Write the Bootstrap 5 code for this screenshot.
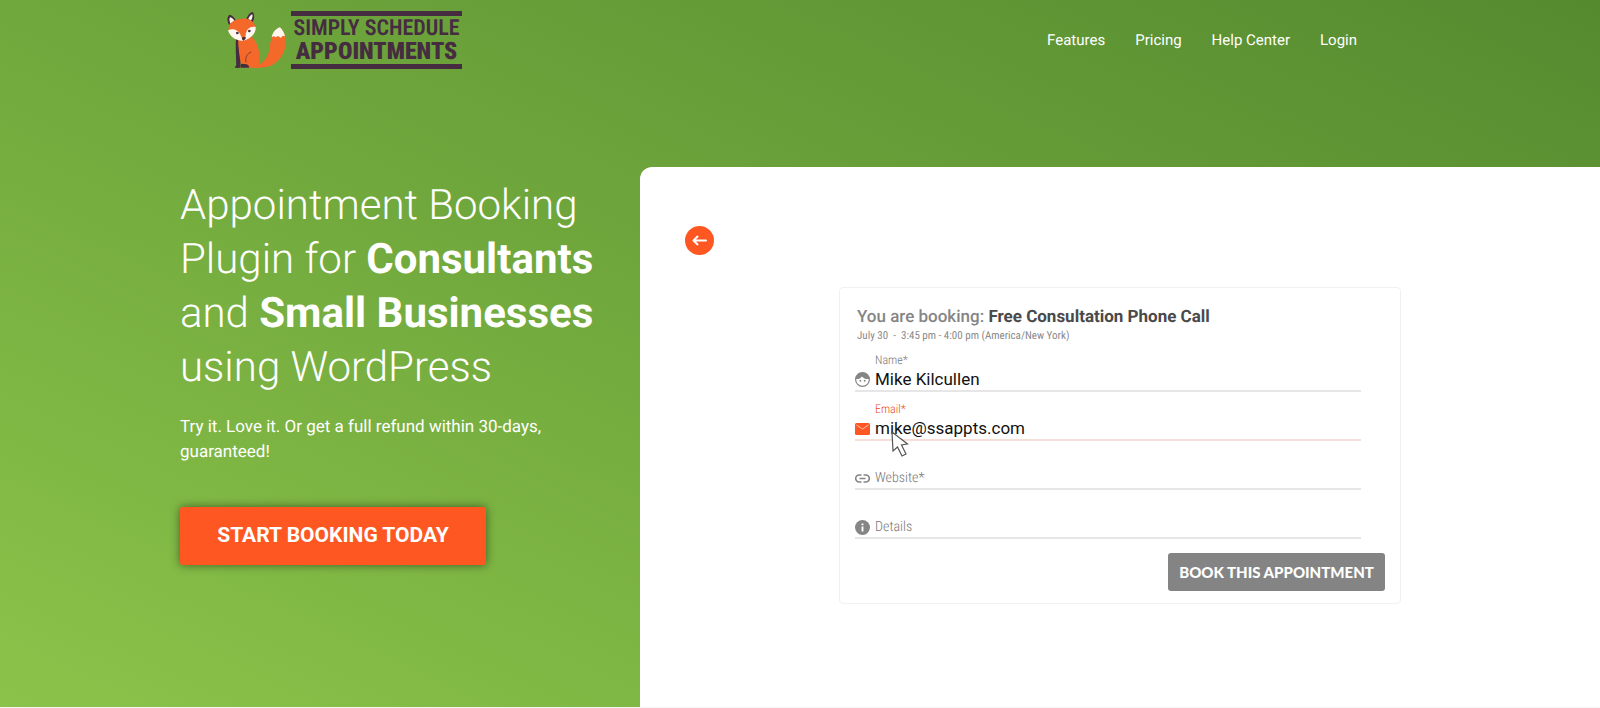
<!DOCTYPE html>
<html lang="en">
<head>
<meta charset="utf-8">
<meta name="viewport" content="width=device-width, initial-scale=1">
<title>Simply Schedule Appointments</title>
<link href="https://cdn.jsdelivr.net/npm/bootstrap@5.3.0/dist/css/bootstrap.min.css" rel="stylesheet">
<style>
  body { font-family: Roboto, "Liberation Sans", sans-serif; text-rendering: geometricPrecision; border-bottom: 1px solid #f5f5f5; background: linear-gradient(25deg, #8bc34a 0%, #558b2f 100%); }
  .site-bar { max-width: 1146px; padding-top: 11px; }
  .brand-words { width: 171px; height: 58px; border-top: 5px solid #452c40; border-bottom: 5px solid #452c40; color: #452c40; font-family: "Roboto Condensed", "Liberation Sans Narrow", Roboto, sans-serif; font-size: 22px; line-height: 22px; white-space: nowrap; }
  .brand-words .top-word { font-weight: 600; }
  .brand-words .low-word { font-size: 24px; font-weight: 900; }
  .site-bar .nav-link { font-size: 15px; font-weight: 400; line-height: 24px; padding: 0; color: #fff; }
  .site-bar .nav { gap: 30px; padding-right: 16px; }
  .hero { margin-top: 98px; }
  .pitch-text { max-width: 420px; margin-right: 40px; padding-top: 12px; }
  .pitch-text h1 { font-size: 42px; font-weight: 300; line-height: 54px; margin-bottom: 20px; }
  .pitch-text h1 strong { font-weight: 700; }
  .pitch-text p { font-size: 17px; line-height: 25px; margin-bottom: 42px; }
  .btn-start { --bs-btn-color: #fff; --bs-btn-bg: #ff5722; --bs-btn-hover-color: #fff; --bs-btn-hover-bg: #f4511e; border: 0; border-radius: 3px; width: 306px; height: 58px; font-size: 21px; font-weight: 700; box-shadow: 0 0 10px rgba(0,0,0,.5); }
  .demo { border-top-left-radius: 12px; padding: 59px 45px; }
  .btn-back { width: 29px; height: 29px; background: #ff5722; }
  .booking { max-width: 562px; margin-top: 32px; padding: 18px 15px 12px; border: 1px solid #f1f1f1; border-radius: 4px; }
  .booking h2 { font-size: 17px; line-height: 22px; font-weight: 500; color: #858585; margin: 0; padding-left: 2px; }
  .booking h2 strong { font-weight: 700; color: #4a4a4a; }
  .when { font-family: "Roboto Condensed", Roboto, sans-serif; font-size: 11px; line-height: 15px; font-weight: 400; color: #8a8a8a; padding-left: 2px; margin-bottom: 0; }
  .entry { height: 49px; margin-right: 24px; border-bottom: 2px solid #e6e6e6; color: #777; }
  .entry.active { border-color: #f6dfd8; }
  .entry label { font-family: "Roboto Condensed", Roboto, sans-serif; font-size: 12px; line-height: 16px; font-weight: 300; padding-left: 20px; }
  .entry.active label { color: #e64a19; }
  .entry .inline-label { font-size: 14px; line-height: 20px; padding-left: 5px; }
  .entry input { font-size: 17px; line-height: 22px; height: 22px; padding: 0 0 0 5px; color: #111; background: transparent; border: 0; border-radius: 0; }
  .entry .inline-label + input { height: 20px; }
  .entry svg.glyph { width: 15px; height: 15px; flex: none; }
  .pointer { left: 36px; top: 39px; }
  .btn-book { --bs-btn-color: #fff; --bs-btn-bg: #848484; --bs-btn-hover-color: #fff; --bs-btn-hover-bg: #757575; border: 0; width: 217px; height: 38px; padding: 0; border-radius: 3px; font: 900 15px/24px Lato, sans-serif; margin-top: 14px; }
  @media (min-width: 992px) {
    .pitch { flex: 0 0 40%; }
  }
  @media (max-width: 991px) {
    .pitch-text { margin: 0 auto 40px; padding: 0 16px; }
    .hero { margin-top: 40px; }
    .site-bar .nav { padding: 0; gap: 16px; }
    .demo { padding: 32px 16px; }
  }
</style>
</head>
<body class="min-vh-100 d-flex flex-column">
<header class="site-bar container-fluid px-0 d-flex flex-wrap justify-content-between align-items-center">
  <a href="#" class="d-flex gap-1 text-decoration-none" aria-label="Simply Schedule Appointments">
    <svg width="60" height="58" viewBox="17 17 180 174" aria-hidden="true">
      <path d="M94 186C124 180 142 153 145 128C147 103 156 77 176 66C194 83 198 111 188 138C176 169 151 187 117 187Z" fill="#f4692a"/>
      <path d="M151 96C154 81 163 70 176 66C184 74 189 82 191 93L184 91L179 98L170 92L162 96L158 92Z" fill="#fff6ee"/>
      <path d="M44 92C42 125 44 158 46 187H55L61 150L55 94Z" fill="#452c40"/>
      <path d="M50 91C50 127 55 157 61 187H113C119 158 115 118 89 91Z" fill="#f4692a"/>
      <path d="M45 121C43 146 45 168 46 187H54L57 174C53 156 51 140 50 122Z" fill="#452c40"/>
      <path d="M57 179Q60 174 67 176Q84 175 83 187H57Z" fill="#452c40"/>
      <path d="M40 187Q40 181 49 178L52 187Z" fill="#452c40"/>
      <path d="M74 171C71 157 76 145 90 140" fill="none" stroke="#452c40" stroke-width="2"/>
      <path d="M23 58C16 45 17 34 24 28C34 30 42 38 45 49Z" fill="#452c40"/>
      <path d="M75 41C79 30 86 21 94 20C101 28 99 43 93 52Z" fill="#452c40"/>
      <path d="M27 55C23 44 24 37 27 36C34 38 38 44 40 49Z" fill="#fff6ee"/>
      <path d="M81 40C84 33 89 28 93 27C95 34 92 42 88 47Z" fill="#fff6ee"/>
      <path d="M22 73C21 57 32 45 54 41C77 36 96 43 102 62C103 83 87 98 67 106C44 105 25 93 22 73Z" fill="#f4692a"/>
      <path d="M20 75C35 68 53 73 59 93L67 106C44 108 26 94 20 75ZM103 65C87 62 74 71 73 91L67 106C89 100 105 82 103 65Z" fill="#fff6ee"/>
      <circle cx="48" cy="83" r="4" fill="#452c40"/><circle cx="84" cy="77" r="4" fill="#452c40"/>
      <path d="M61 97Q67 94 74 96Q73 104 67 106Q62 104 61 97Z" fill="#452c40"/>
    </svg>
    <div class="brand-words d-flex flex-column justify-content-center align-items-center"><span class="top-word">SIMPLY SCHEDULE</span><span class="low-word">APPOINTMENTS</span></div>
  </a>
  <nav class="nav" aria-label="Main">
    <a class="nav-link" href="#">Features</a>
    <a class="nav-link" href="#">Pricing</a>
    <a class="nav-link" href="#">Help Center</a>
    <a class="nav-link" href="#">Login</a>
  </nav>
</header>

<main class="hero flex-fill d-flex flex-column flex-lg-row">
  <section class="pitch d-flex text-white">
    <div class="pitch-text flex-fill ms-auto">
      <h1>Appointment Booking Plugin for <strong>Consultants</strong> and <strong>Small Businesses</strong> using WordPress</h1>
      <p>Try it. Love it. Or get a full refund within 30-days, guaranteed!</p>
      <button type="button" class="btn btn-start">START BOOKING TODAY</button>
    </div>
  </section>

  <section class="demo bg-white flex-fill">
    <button type="button" class="btn-back btn p-0 border-0 rounded-circle d-flex align-items-center justify-content-center" aria-label="Back">
      <svg width="15" height="11" viewBox="0 0 15 11" fill="none" stroke="#fff" stroke-width="2" stroke-linecap="round" stroke-linejoin="round" aria-hidden="true"><path d="M14 5.500H2M5.500 1.500L1.500 5.500L5.500 9.500"/></svg>
    </button>
    <form class="booking mx-auto">
      <h2>You are booking: <strong>Free Consultation Phone Call</strong></h2>
      <p class="when">July 30 &nbsp;-&nbsp; 3:45 pm - 4:00 pm (America/New York)</p>
      <div class="entry d-flex flex-column justify-content-end">
        <label for="name">Name*</label>
        <div class="d-flex align-items-center">
          <svg class="glyph" viewBox="0 0 24 24" aria-hidden="true"><circle cx="12" cy="12" r="11" fill="#fff" stroke="#858585" stroke-width="2"/><path d="M1 11C2 4 6 1 12 1S22 4 23 11C18 12 14 10 11 7C9 10 5 12 1 11Z" fill="#858585"/><circle cx="8.500" cy="14" r="1.500" fill="#858585"/><circle cx="15.500" cy="14" r="1.500" fill="#858585"/></svg>
          <input id="name" type="text" class="form-control shadow-none" value="Mike Kilcullen">
        </div>
      </div>
      <div class="entry active d-flex flex-column justify-content-end position-relative">
        <label for="email">Email*</label>
        <div class="d-flex align-items-center">
          <svg class="glyph" viewBox="0 0 15 15" aria-hidden="true"><rect y="2" width="15" height="12" rx="1.500" fill="#ff5722"/><path d="M1.500 4L7.500 8L13.500 4" fill="none" stroke="#ffc4ae"/></svg>
          <input id="email" type="email" class="form-control shadow-none" value="mike@ssappts.com">
        </div>
        <svg class="pointer position-absolute" width="18" height="27" viewBox="0 0 18 27" aria-hidden="true"><path d="M1 1L2 20L6.500 16L11 25L15 23L10.500 14L16.500 13Z" fill="#fff" stroke="#555" stroke-width="1.200"/></svg>
      </div>
      <div class="entry d-flex align-items-end">
        <div class="d-flex align-items-center w-100">
          <svg class="glyph" viewBox="0 0 15 15" fill="none" stroke="#858585" stroke-width="1.600" aria-hidden="true"><path d="M6.500 4H4.200A3.500 3.500 0 0 0 4.200 11H6.500M8.500 4H10.800A3.500 3.500 0 0 1 10.800 11H8.500M4.500 7.500H10.500"/></svg>
          <label class="inline-label" for="site">Website*</label>
          <input id="site" type="url" class="form-control shadow-none">
        </div>
      </div>
      <div class="entry d-flex align-items-end">
        <div class="d-flex align-items-center w-100">
          <svg class="glyph" viewBox="0 0 24 24" aria-hidden="true"><circle cx="12" cy="12" r="12" fill="#858585"/><path d="M10.500 5.500H13.500V8.500H10.500ZM10.500 10.500H13.500V18.500H10.500Z" fill="#fff"/></svg>
          <label class="inline-label" for="details">Details</label>
          <input id="details" type="text" class="form-control shadow-none">
        </div>
      </div>
      <div class="text-end"><button type="submit" class="btn btn-book">BOOK THIS APPOINTMENT</button></div>
    </form>
  </section>
</main>
<script src="https://cdn.jsdelivr.net/npm/bootstrap@5.3.0/dist/js/bootstrap.bundle.min.js"></script>
</body>
</html>
